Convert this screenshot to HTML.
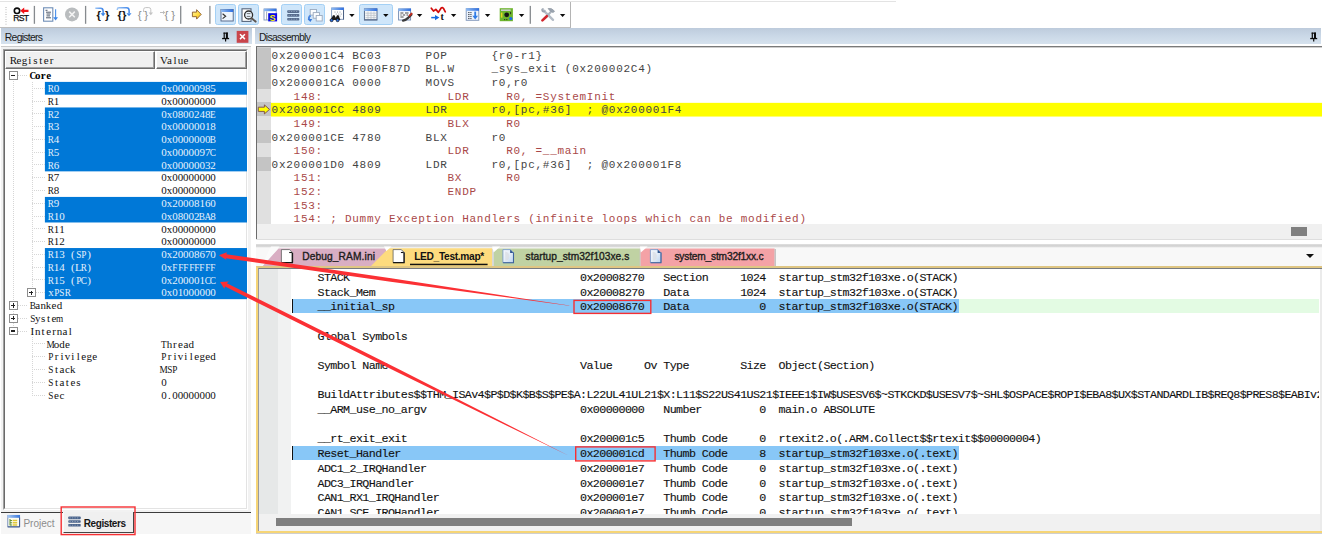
<!DOCTYPE html>
<html>
<head>
<meta charset="utf-8">
<title>uVision Debug</title>
<style>
html,body{margin:0;padding:0;}
body{width:1322px;height:538px;overflow:hidden;background:#fff;position:relative;font-family:"Liberation Sans",sans-serif;}
div,span,svg{position:absolute;box-sizing:border-box;}
i,s,u,b{font-style:normal;text-decoration:none;font-weight:normal;}

/* ---------- toolbar ---------- */
#topline{left:0;top:1px;width:896px;height:1.4px;background:#e3e3e3;}
#tb{left:0;top:2.4px;width:571px;height:25.2px;background:#fefefe;border-right:1.2px solid #b4b4b4;border-bottom:1px solid #bdbdbd;}
.grip{left:5px;top:5px;width:2px;height:19px;background-image:linear-gradient(#c8c8c8 50%,transparent 50%);background-size:2px 2.4px;opacity:.8}
.sep{top:6px;width:1.3px;height:18px;background:#8a8a8a;}
.tog{top:4px;height:20.6px;background:#cfe6fa;border:1px solid #a3d0f5;border-radius:2.5px;}
.dd{top:13.7px;width:0;height:0;border-left:2.7px solid transparent;border-right:2.7px solid transparent;border-top:3px solid #111;}

/* ---------- title bars ---------- */
.title{top:27.6px;height:16.3px;background:linear-gradient(#bdcbdc,#c9d7e6 45%,#d6e2ee);}
.title b{position:absolute;left:3.6px;top:4.2px;font-size:10.4px;letter-spacing:-0.7px;color:#1a1a1a;line-height:12px;}

/* ---------- left panel ---------- */
#lp{left:1.2px;top:46px;width:250.3px;height:466.4px;background:#f2f2f2;border-top:1px solid #cacaca;}
#lpf{left:3.4px;top:48.6px;width:244.4px;height:461.4px;background:#fff;border:1px solid #a0a0a0;border-right-color:#fff;border-bottom-color:#fff;}
#lpf2{left:4.3px;top:49.5px;width:242.6px;height:459.6px;border:1px solid #6a6a6a;border-right-color:#e3e3e3;border-bottom-color:#e3e3e3;}
.hd{top:50.5px;height:18px;background:#f0f0f0;border-top:1px solid #fff;border-left:1px solid #fff;border-right:1.2px solid #6d6d6d;border-bottom:1.2px solid #6d6d6d;}
.hd:after{content:"";position:absolute;right:0;bottom:0;left:0;top:0;border-right:1px solid #a0a0a0;border-bottom:1px solid #a0a0a0;}
.rt{height:12.8px;line-height:12.9px;font-family:"Liberation Serif",serif;font-size:11px;color:#111;white-space:nowrap;}
.rt i{display:inline-block;width:15.46px;margin:0 -5px;text-align:center;position:static;}
.rt i.n{transform:scaleX(.84);}
.rt.w{color:#e6f1fb;}
.rt.b{font-weight:bold;color:#000;}
.rt.b i{font-weight:bold;width:15.5px;}
.rsel{left:45px;width:202px;background:#0b78d7;}
.tl{height:1px;background-image:linear-gradient(90deg,#d6d6d6 50%,transparent 50%);background-size:2px 1px;}
.tv{width:1px;background-image:linear-gradient(#d6d6d6 50%,transparent 50%);background-size:1px 2px;}
.tb{width:8.6px;height:8.6px;border:1px solid #8e8e8e;background:#fff;}
.tb s{position:absolute;left:1.2px;right:1.2px;top:2.6px;height:1.3px;background:#222;}
.tb u{position:absolute;top:1.2px;bottom:1.2px;left:2.6px;width:1.3px;background:#222;}

/* bottom tabs of left panel */
#lbline{left:1.2px;top:511.7px;width:250px;height:1.2px;background:#3c3c3c;}
#lbtabs{left:1.2px;top:512.9px;width:250.3px;height:21px;background:#f6f6f6;}
#rtab{left:63px;top:512px;width:70.6px;height:20.6px;background:#f0f0f0;border-right:1.3px solid #444;border-bottom:1.3px solid #444;border-left:1px solid #fafafa;}
#redbox1{left:60.5px;top:506.4px;width:75.3px;height:28.8px;border:1.3px solid #f2353a;}
.btxt{font-size:10px;line-height:12px;letter-spacing:0;white-space:nowrap;}

/* ---------- disassembly ---------- */
#dis{left:255.6px;top:46px;width:1066.4px;height:178px;background:#fff;border-top:1px solid #7a7a7a;border-left:1.2px solid #6c6c6c;box-shadow:inset 0 1px 0 #cdcdcd;}
.dg{left:257px;width:14px;background:#c4c4c4;}
.dg.l{background:#e0e0e0;}
.dy{left:270.8px;width:1051.2px;background:#ffff00;}
.dt{left:271.6px;height:13.7px;line-height:14.2px;font-family:"Liberation Mono",monospace;font-size:11px;letter-spacing:0.73px;color:#444;white-space:pre;}
.dt.src{color:#a94848;}
#dsb{left:256.8px;top:224px;width:1065.2px;height:15.8px;background:#f0f0f0;}
#dsbl{left:255.6px;top:224px;width:1.2px;height:15.6px;background:#6c6c6c;}
#dsbb{left:256px;top:239.4px;width:1066px;height:1px;background:#dedede;}
#dthumb{left:1291.2px;top:227.2px;width:16px;height:8.8px;background:#808080;}

/* ---------- editor tabs ---------- */
#strip{left:256px;top:244px;width:1066px;height:22.2px;background:linear-gradient(#e6e6e6,#d2d2d2 1px,#d6d6d6 2.4px,#f1f1f1 3.6px,#f8f8f8 4.5px);}
#tabdd{left:1305.8px;top:254px;width:0;height:0;border-left:4.4px solid transparent;border-right:4.4px solid transparent;border-top:4.6px solid #111;}
.tabt{top:250.8px;font-size:10.2px;line-height:12px;color:#1c1c1c;white-space:nowrap;letter-spacing:-0.1px;-webkit-text-stroke:0.35px #1c1c1c;}

/* ---------- editor ---------- */
#edY{left:256px;top:265.8px;width:1070px;height:267px;border:2.2px solid #f6d576;border-top-color:#dfc683;background:#fff;}
#edG{left:258.2px;top:267.6px;width:1066px;height:263.4px;border-left:1.2px solid #9b9b9b;border-top:1.2px solid #787c82;}
#edshadow{left:256px;top:532.8px;width:1066px;height:1px;background:#cfcfcf;}
#mg1{left:259.4px;top:268.8px;width:18.8px;height:245.4px;background:#e6e8e8;}
#mg2{left:278.2px;top:268.8px;width:13px;height:245.4px;background:#f1f2f2;}
#edclip{left:259.4px;top:268.8px;width:1059.6px;height:245.2px;overflow:hidden;}
#edr{left:1320.4px;top:269px;width:1.6px;height:262px;background:#ebebeb;}
.mt{left:291.9px;height:14.7px;line-height:14.9px;font-family:"Liberation Mono",monospace;font-size:11.7px;letter-spacing:-0.61px;color:#121212;white-space:pre;-webkit-text-stroke:0.12px #121212;}
.mh{background:#88c7f7;}
.mg{right:0;background:#e3fbe3;}
.mc{left:292px;width:1.3px;background:#111;}
#esb{left:259.4px;top:514px;width:1062.6px;height:16.6px;background:#f1f1f1;}
#ethumb{left:276px;top:517.5px;width:576px;height:8.4px;background:#7f7f7f;}
.rbox{border:1.25px solid #f0343a;}
</style>
</head>
<body>

<!-- toolbar -->
<div id="topline"></div>
<div id="tb">
  <div class="grip"></div>
</div>

<div class="tog" style="left:214.9px;width:21.3px"></div>
<div class="tog" style="left:237.7px;width:20.9px"></div>
<div class="tog" style="left:281.3px;width:21.2px"></div>
<div class="tog" style="left:303.8px;width:21px"></div>
<div class="tog" style="left:359px;width:33.7px"></div>
<svg style="left:0;top:0" width="571" height="28" viewBox="0 0 571 28">
<defs>
<linearGradient id="wt" x1="0" x2="1"><stop offset="0" stop-color="#8fbaf0"/><stop offset="1" stop-color="#2f6fe0"/></linearGradient>
<linearGradient id="ya" x1="0" x2="1" y1="0" y2="1"><stop offset="0" stop-color="#fff6a8"/><stop offset="0.6" stop-color="#ffd83a"/><stop offset="1" stop-color="#e8a820"/></linearGradient>
<linearGradient id="ba" x1="0" x2="1"><stop offset="0" stop-color="#9cc4f4"/><stop offset="1" stop-color="#3f86ea"/></linearGradient>
</defs>
<rect x="33.75" y="5.9" width="1.3" height="17.9" fill="#868a8e"/><rect x="84.95" y="5.9" width="1.3" height="17.9" fill="#868a8e"/><rect x="180.05" y="5.9" width="1.3" height="17.9" fill="#868a8e"/><rect x="209.25" y="5.9" width="1.3" height="17.9" fill="#868a8e"/><rect x="529.65" y="5.9" width="1.3" height="17.9" fill="#868a8e"/>
<polygon points="349.2,13.9 354.6,13.9 351.9,16.9" fill="#0c0c0c"/><polygon points="383.1,13.9 388.5,13.9 385.8,16.9" fill="#0c0c0c"/><polygon points="416.9,13.9 422.3,13.9 419.6,16.9" fill="#0c0c0c"/><polygon points="450.9,13.9 456.3,13.9 453.6,16.9" fill="#0c0c0c"/><polygon points="484.9,13.9 490.3,13.9 487.6,16.9" fill="#0c0c0c"/><polygon points="518.9,13.9 524.3,13.9 521.6,16.9" fill="#0c0c0c"/><polygon points="559.9,13.9 565.3,13.9 562.6,16.9" fill="#0c0c0c"/>
<!-- RST -->
<circle cx="17" cy="10.8" r="2.7" fill="#fff" stroke="#0a0a0a" stroke-width="1.6"/>
<polygon points="20.3,10.8 24.2,7.6 24.2,9.7 28.5,9.7 28.5,11.9 24.2,11.9 24.2,14" fill="#f01218"/>
<text x="13.3" y="21" font-family="Liberation Sans" font-size="8.6" letter-spacing="-0.75" fill="#0c0c0c" stroke="#0c0c0c" stroke-width="0.25">RST</text>
<!-- doc + blue down arrow -->
<rect x="43.6" y="7.8" width="9.2" height="13.4" fill="#fff" stroke="#6e8db6" stroke-width="1.1"/>
<path d="M45.5 10.3h2M46 12.2h5M46.5 14h4M46.5 15.9h3.5M46 17.8h5" stroke="#3d4a5c" stroke-width="0.9" fill="none"/>
<path d="M55.6 9.3V18" stroke="#4a90ea" stroke-width="1.1"/>
<polygon points="53.2,17.2 58,17.2 55.6,20.4" fill="#3b86e8"/>
<!-- stop -->
<circle cx="72" cy="14.4" r="7" fill="#b9bcbe"/>
<path d="M69.2 11.6l5.6 5.6M74.8 11.6l-5.6 5.6" stroke="#f4f4f4" stroke-width="1.5"/>
<!-- step in -->
<g font-family="Liberation Sans" font-weight="bold" font-size="11.3" fill="#161616">
<text x="96.6" y="18.5">{</text><text x="104.9" y="18.5">}</text>
<text x="117.6" y="18.5">{</text><text x="122" y="18.5">}</text>
</g>
<path d="M95.3 8.3h5.2q2.6 0 2.6 2.6v3" fill="none" stroke="url(#ba)" stroke-width="1.5"/>
<polygon points="100.6,13.3 105.5,13.3 103.1,16.2" fill="#3b86e8"/>
<!-- step over -->
<path d="M117.3 10v-0.6q0-1.6 1.6-1.6h7.6q2.6 0 2.6 2.6v2.6" fill="none" stroke="url(#ba)" stroke-width="1.5"/>
<polygon points="126.5,13.2 131.5,13.2 129,16.2" fill="#3b86e8"/>
<!-- step out (gray) -->
<g font-family="Liberation Sans" font-size="11.5" fill="#8f8f8f">
<text x="137.8" y="19">{</text><text x="144.2" y="19">}</text>
<text x="164.6" y="19">{</text><text x="171.2" y="19">}</text>
</g>
<path d="M143.6 12v-2.4q0-2 2-2h3.2q2 0 2 2v3.4" fill="none" stroke="#c3c3c3" stroke-width="1"/>
<polygon points="148.6,12.6 153,12.6 150.8,15.2" fill="#c3c3c3"/>
<!-- run to cursor (gray) -->
<path d="M160 12.5h4.6M163 10.9l1.7 1.6l-1.7 1.6" stroke="#b5b5b5" stroke-width="0.9" fill="none"/>
<!-- yellow arrow -->
<polygon points="192.4,12.1 196.6,12.1 196.6,9.7 201.2,14.4 196.6,19.1 196.6,16.7 192.4,16.7" fill="url(#ya)" stroke="#8a5a2a" stroke-width="0.9" stroke-linejoin="round"/>
<!-- cmd window -->
<rect x="221" y="9.5" width="12.2" height="11.5" fill="#eef5fd" stroke="#4d6183" stroke-width="0.9"/>
<rect x="221" y="9.3" width="12.2" height="2.7" fill="url(#wt)"/>
<path d="M222.6 13.8l3 2.4l-3 2.4" stroke="#333" stroke-width="1.2" fill="none"/>
<!-- doc + magnifier -->
<rect x="242" y="8.8" width="9" height="12.6" fill="#fff" stroke="#56657c" stroke-width="1.1"/>
<circle cx="248.6" cy="15" r="4" fill="#e8f2fc" stroke="#2e2e2e" stroke-width="1.3"/>
<path d="M246.8 13.6h3.6M246.8 16.4h3.6" stroke="#555" stroke-width="0.8"/>
<path d="M251.6 18.2l4 3.4" stroke="#5d5650" stroke-width="2" stroke-linecap="round"/>
<!-- window with S -->
<rect x="264" y="9" width="12.2" height="11" fill="#fff" stroke="#7d94b8" stroke-width="0.9"/>
<rect x="264" y="8.7" width="12.4" height="2.5" fill="url(#wt)"/>
<path d="M266.6 11.5v8.5" stroke="#8a97ab" stroke-width="0.8"/>
<rect x="268.2" y="13.2" width="8.9" height="8.2" fill="#0a0ae6"/>
<text x="269.6" y="20.8" font-family="Liberation Sans" font-weight="bold" font-size="9.2" fill="#f2f200">S</text>
<!-- registers -->
<g fill="#566b8c"><rect x="287.2" y="10.2" width="12.1" height="2.7" rx="0.8"/><rect x="287.2" y="14" width="12.1" height="2.8" rx="0.8"/><rect x="287.2" y="17.9" width="12.1" height="2.7" rx="0.8"/></g>
<path d="M288.5 11.5h10M288.5 15.4h10M288.5 19.2h10" stroke="#9fb0c8" stroke-width="0.7" stroke-dasharray="1.2 1.3"/>
<!-- call stack windows -->
<g fill="#fbfdff" stroke="#9aa9be" stroke-width="0.9"><rect x="310.2" y="9.5" width="6.3" height="5.6"/><rect x="313.2" y="12.6" width="6.3" height="5.6"/><rect x="316.2" y="15.5" width="6" height="5.5"/></g>
<path d="M310.6 15.6q-2.6 1.6 -1.4 4.4" fill="none" stroke="#4a86e0" stroke-width="1.8"/>
<polygon points="307.6,19 312.2,19 310.4,22" fill="#3a78d8"/>
<!-- window with binoculars -->
<rect x="331.6" y="8" width="12" height="11.3" fill="#fff" stroke="#7d94b8" stroke-width="0.9"/>
<rect x="331.4" y="7.6" width="12.5" height="2.4" fill="url(#wt)"/>
<g fill="#7c8798"><circle cx="335" cy="12" r=".55"/><circle cx="337.5" cy="12" r=".55"/><circle cx="340" cy="12" r=".55"/><circle cx="336.2" cy="14" r=".55"/><circle cx="338.8" cy="14" r=".55"/><circle cx="341.2" cy="14" r=".55"/><circle cx="340" cy="16" r=".55"/></g>
<rect x="343" y="10" width="1" height="9.5" fill="#4d6183"/>
<path d="M330.6 20l2.4-4.8h1.6l1.2 2.6l1.2-2.6h1.6l1.8 4.8z" fill="#1a1a1a"/>
<circle cx="331.6" cy="20.2" r="1.5" fill="#2c6fe0" stroke="#111" stroke-width="0.7"/><circle cx="337.6" cy="20.2" r="1.5" fill="#2c6fe0" stroke="#111" stroke-width="0.7"/>
<!-- table window -->
<rect x="364.4" y="8.8" width="12.6" height="11.2" fill="#f4f6f8" stroke="#4d6183" stroke-width="0.9"/>
<rect x="364.2" y="8.4" width="13" height="2.6" fill="url(#wt)"/>
<path d="M365.5 13.2h10.5M365.5 15.4h10.5M365.5 17.6h10.5M368 11.5v8M371 11.5v8M374 11.5v8" stroke="#b9bec6" stroke-width="0.7"/>
<rect x="364.2" y="19.2" width="13" height="1.1" fill="#5e7190"/>
<!-- window + pen -->
<rect x="398.6" y="9" width="12" height="11" fill="#fafcff" stroke="#6f88b0" stroke-width="0.9"/>
<rect x="398.3" y="8.5" width="12.7" height="2.6" fill="url(#wt)"/>
<path d="M400.4 13h3M405 13h3.5M400.4 15h1.2M402.8 15h2.4M406.5 15h1.6M400.4 17h3.2" stroke="#333" stroke-width="0.9"/>
<path d="M403 20.6q3-0.6 5.4-3l3-3" stroke="#3c3c3c" stroke-width="2.2" fill="none" stroke-linecap="round"/>
<path d="M409.6 15.6l2-2" stroke="#c02a1c" stroke-width="2" stroke-linecap="round"/>
<!-- wave / arrow / t -->
<path d="M431.3 8.2l2.2 2.9l2.3-1.7l2.6 3l2.6-4.2q1.4-1.2 2.6 0.4l1.7 3.2" fill="none" stroke="#d20a0a" stroke-width="1.7" stroke-linecap="round" stroke-linejoin="round"/>
<path d="M431.2 17.6h4.6" stroke="#1268e0" stroke-width="1.5"/>
<polygon points="435,15 439.4,17.6 435,20.2" fill="#1268e0"/>
<text x="440.6" y="19.6" font-family="Liberation Serif" font-weight="bold" font-size="10" fill="#111">t</text>
<!-- window with list + down arrow -->
<rect x="466.2" y="8.6" width="12.6" height="11.7" fill="#eef4fc" stroke="#7d94b8" stroke-width="0.9"/>
<rect x="466" y="8.2" width="13" height="2.6" fill="url(#wt)"/>
<path d="M468 12.6h3.6M468 14.6h3.6M468 16.6h3.6M468 18.6h3.6" stroke="#3b4350" stroke-width="0.9" stroke-dasharray="1.6 0.6"/>
<path d="M475.2 11.6v5" stroke="#2f7be6" stroke-width="1.8"/>
<polygon points="472.4,15.8 478,15.8 475.2,19.4" fill="#2f7be6"/>
<!-- green board -->
<rect x="499.7" y="8.2" width="13.2" height="13" fill="#6db52c"/>
<rect x="501" y="9.4" width="9.6" height="1.6" fill="#c9cdd0"/>
<rect x="500.9" y="12.6" width="1.5" height="5" fill="#e8d820"/>
<circle cx="506.7" cy="14.8" r="2.4" fill="#161616"/>
<path d="M504 19.6h1.2M506.2 19.6h1.2M510.6 12v2.2" stroke="#2a3a1a" stroke-width="1"/>
<circle cx="510.8" cy="18.6" r="1.6" fill="#1a6ae8"/>
<!-- tools -->
<path d="M543.2 10.2l9.8 9.6" stroke="#b4bcc6" stroke-width="2.4" stroke-linecap="round"/>
<path d="M541.2 9.6q0.6 -2 2.8 -1.6l-1.4 1.6l1.4 1.4l1.6-1.2q0.2 2.4-2 2.8q-2.2 0-2.4-3z" fill="#9aa4b0"/>
<path d="M552.2 10.6l-5 5.2" stroke="#aab2bc" stroke-width="2.2"/>
<path d="M546.8 16.2l-4.4 4.2" stroke="#d0242c" stroke-width="2.6" stroke-linecap="round"/>
<path d="M548 8.6q3.4-1.4 6.6 2.6l-1.6 1.6q-1.2-1.6-2.8-1.8z" fill="#9aa4b0" stroke="#8a929c" stroke-width="0.6"/>
</svg>


<!-- title bars -->
<div class="title" style="left:1.2px;width:250.6px"><b>Registers</b></div>
<div class="title" style="left:255.4px;width:1065.6px"><b>Disassembly</b></div>


<!-- pin / close icons -->
<svg style="left:0;top:27px" width="1322" height="18" viewBox="0 27 1322 18">
  <g fill="#0a0a0a">
    <rect x="223.5" y="32.6" width="4.4" height="1.1"/>
    <rect x="223.6" y="32.6" width="1.2" height="5.8"/>
    <rect x="225.9" y="32.6" width="2" height="5.8"/>
    <rect x="222.1" y="37.9" width="7" height="1.3"/>
    <rect x="225" y="39" width="1.2" height="2.5"/>
  </g>
  <g fill="#0a0a0a" transform="translate(1088.1,0)">
    <rect x="223.5" y="32.6" width="4.4" height="1.1"/>
    <rect x="223.6" y="32.6" width="1.2" height="5.8"/>
    <rect x="225.9" y="32.6" width="2" height="5.8"/>
    <rect x="222.1" y="37.9" width="7" height="1.3"/>
    <rect x="225" y="39" width="1.2" height="2.5"/>
  </g>
  <rect x="236.7" y="30.9" width="11.7" height="11.9" fill="#c9454b"/>
  <path d="M240 34.2l4.9 4.9M244.9 34.2l-4.9 4.9" stroke="#fff" stroke-width="1.5"/>
</svg>

<!-- left panel -->
<div id="lp"></div>
<div id="lpf"></div>
<div id="lpf2"></div>
<div class="hd" style="left:5.3px;width:150.2px"></div>
<div class="hd" style="left:155.5px;width:91.4px"></div>
<div class="rt" style="left:10.8px;top:53.8px"><i>R</i><i>e</i><i>g</i><i>i</i><i>s</i><i>t</i><i>e</i><i>r</i></div>
<div class="rt" style="left:161.3px;top:53.8px"><i>V</i><i>a</i><i>l</i><i>u</i><i>e</i></div>
<svg style="left:0;top:0" width="252" height="538" viewBox="0 0 252 538"><g fill="#0078d7"><rect x="44.9" y="81.90" width="202.1" height="12.78"/><rect x="44.9" y="107.46" width="202.1" height="63.90"/><rect x="44.9" y="196.92" width="202.1" height="25.56"/><rect x="44.9" y="248.04" width="202.1" height="51.12"/></g></svg>
<div class="tv" style="left:13px;top:80.51px;height:246.60px"></div>
<div class="tv" style="left:31.5px;top:81.51px;height:207.26px"></div>
<div class="tv" style="left:31.5px;top:337.11px;height:57.90px"></div>
<div class="rt b" style="left:29.5px;top:69.17px"><i class="n">C</i><i>o</i><i>r</i><i>e</i></div>
<div class="tl" style="left:18.0px;top:75.01px;width:10.0px"></div>
<div class="tb" style="left:9.0px;top:71.11px"><s></s></div>
<div class="rt w" style="left:48.3px;top:81.95px"><i class="n">R</i><i>0</i></div>
<div class="rt w" style="left:161.3px;top:81.95px"><i>0</i><i>x</i><i>0</i><i>0</i><i>0</i><i>0</i><i>0</i><i>9</i><i>8</i><i>5</i></div>
<div class="tl" style="left:32px;top:87.79px;width:13px"></div>
<div class="rt" style="left:48.3px;top:94.73px"><i class="n">R</i><i>1</i></div>
<div class="rt" style="left:161.3px;top:94.73px"><i>0</i><i>x</i><i>0</i><i>0</i><i>0</i><i>0</i><i>0</i><i>0</i><i>0</i><i>0</i></div>
<div class="tl" style="left:32px;top:100.57px;width:13px"></div>
<div class="rt w" style="left:48.3px;top:107.51px"><i class="n">R</i><i>2</i></div>
<div class="rt w" style="left:161.3px;top:107.51px"><i>0</i><i>x</i><i>0</i><i>8</i><i>0</i><i>0</i><i>2</i><i>4</i><i>8</i><i class="n">E</i></div>
<div class="tl" style="left:32px;top:113.35px;width:13px"></div>
<div class="rt w" style="left:48.3px;top:120.29px"><i class="n">R</i><i>3</i></div>
<div class="rt w" style="left:161.3px;top:120.29px"><i>0</i><i>x</i><i>0</i><i>0</i><i>0</i><i>0</i><i>0</i><i>0</i><i>1</i><i>8</i></div>
<div class="tl" style="left:32px;top:126.13px;width:13px"></div>
<div class="rt w" style="left:48.3px;top:133.07px"><i class="n">R</i><i>4</i></div>
<div class="rt w" style="left:161.3px;top:133.07px"><i>0</i><i>x</i><i>0</i><i>0</i><i>0</i><i>0</i><i>0</i><i>0</i><i>0</i><i class="n">B</i></div>
<div class="tl" style="left:32px;top:138.91px;width:13px"></div>
<div class="rt w" style="left:48.3px;top:145.85px"><i class="n">R</i><i>5</i></div>
<div class="rt w" style="left:161.3px;top:145.85px"><i>0</i><i>x</i><i>0</i><i>0</i><i>0</i><i>0</i><i>0</i><i>9</i><i>7</i><i class="n">C</i></div>
<div class="tl" style="left:32px;top:151.69px;width:13px"></div>
<div class="rt w" style="left:48.3px;top:158.63px"><i class="n">R</i><i>6</i></div>
<div class="rt w" style="left:161.3px;top:158.63px"><i>0</i><i>x</i><i>0</i><i>0</i><i>0</i><i>0</i><i>0</i><i>0</i><i>3</i><i>2</i></div>
<div class="tl" style="left:32px;top:164.47px;width:13px"></div>
<div class="rt" style="left:48.3px;top:171.41px"><i class="n">R</i><i>7</i></div>
<div class="rt" style="left:161.3px;top:171.41px"><i>0</i><i>x</i><i>0</i><i>0</i><i>0</i><i>0</i><i>0</i><i>0</i><i>0</i><i>0</i></div>
<div class="tl" style="left:32px;top:177.25px;width:13px"></div>
<div class="rt" style="left:48.3px;top:184.19px"><i class="n">R</i><i>8</i></div>
<div class="rt" style="left:161.3px;top:184.19px"><i>0</i><i>x</i><i>0</i><i>0</i><i>0</i><i>0</i><i>0</i><i>0</i><i>0</i><i>0</i></div>
<div class="tl" style="left:32px;top:190.03px;width:13px"></div>
<div class="rt w" style="left:48.3px;top:196.97px"><i class="n">R</i><i>9</i></div>
<div class="rt w" style="left:161.3px;top:196.97px"><i>0</i><i>x</i><i>2</i><i>0</i><i>0</i><i>0</i><i>8</i><i>1</i><i>6</i><i>0</i></div>
<div class="tl" style="left:32px;top:202.81px;width:13px"></div>
<div class="rt w" style="left:48.3px;top:209.75px"><i class="n">R</i><i>1</i><i>0</i></div>
<div class="rt w" style="left:161.3px;top:209.75px"><i>0</i><i>x</i><i>0</i><i>8</i><i>0</i><i>0</i><i>2</i><i class="n">B</i><i class="n">A</i><i>8</i></div>
<div class="tl" style="left:32px;top:215.59px;width:13px"></div>
<div class="rt" style="left:48.3px;top:222.53px"><i class="n">R</i><i>1</i><i>1</i></div>
<div class="rt" style="left:161.3px;top:222.53px"><i>0</i><i>x</i><i>0</i><i>0</i><i>0</i><i>0</i><i>0</i><i>0</i><i>0</i><i>0</i></div>
<div class="tl" style="left:32px;top:228.37px;width:13px"></div>
<div class="rt" style="left:48.3px;top:235.31px"><i class="n">R</i><i>1</i><i>2</i></div>
<div class="rt" style="left:161.3px;top:235.31px"><i>0</i><i>x</i><i>0</i><i>0</i><i>0</i><i>0</i><i>0</i><i>0</i><i>0</i><i>0</i></div>
<div class="tl" style="left:32px;top:241.15px;width:13px"></div>
<div class="rt w" style="left:48.3px;top:248.09px"><i class="n">R</i><i>1</i><i>3</i><i>&nbsp;</i><i>(</i><i class="n">S</i><i class="n">P</i><i>)</i></div>
<div class="rt w" style="left:161.3px;top:248.09px"><i>0</i><i>x</i><i>2</i><i>0</i><i>0</i><i>0</i><i>8</i><i>6</i><i>7</i><i>0</i></div>
<div class="tl" style="left:32px;top:253.93px;width:13px"></div>
<div class="rt w" style="left:48.3px;top:260.87px"><i class="n">R</i><i>1</i><i>4</i><i>&nbsp;</i><i>(</i><i>L</i><i class="n">R</i><i>)</i></div>
<div class="rt w" style="left:161.3px;top:260.87px"><i>0</i><i>x</i><i class="n">F</i><i class="n">F</i><i class="n">F</i><i class="n">F</i><i class="n">F</i><i class="n">F</i><i class="n">F</i><i class="n">F</i></div>
<div class="tl" style="left:32px;top:266.71px;width:13px"></div>
<div class="rt w" style="left:48.3px;top:273.65px"><i class="n">R</i><i>1</i><i>5</i><i>&nbsp;</i><i>(</i><i class="n">P</i><i class="n">C</i><i>)</i></div>
<div class="rt w" style="left:161.3px;top:273.65px"><i>0</i><i>x</i><i>2</i><i>0</i><i>0</i><i>0</i><i>0</i><i>1</i><i class="n">C</i><i class="n">C</i></div>
<div class="tl" style="left:32px;top:279.49px;width:13px"></div>
<div class="rt w" style="left:48.3px;top:286.43px"><i>x</i><i class="n">P</i><i class="n">S</i><i class="n">R</i></div>
<div class="rt w" style="left:161.3px;top:286.43px"><i>0</i><i>x</i><i>0</i><i>1</i><i>0</i><i>0</i><i>0</i><i>0</i><i>0</i><i>0</i></div>
<div class="tl" style="left:36.0px;top:292.27px;width:9.0px"></div>
<div class="tb" style="left:27.0px;top:288.37px"><s></s><u></u></div>
<div class="rt" style="left:29.5px;top:299.21px"><i class="n">B</i><i>a</i><i>n</i><i>k</i><i>e</i><i>d</i></div>
<div class="tl" style="left:18.0px;top:305.05px;width:10.0px"></div>
<div class="tb" style="left:9.0px;top:301.15px"><s></s><u></u></div>
<div class="rt" style="left:29.5px;top:311.99px"><i class="n">S</i><i>y</i><i>s</i><i>t</i><i>e</i><i class="n">m</i></div>
<div class="tl" style="left:18.0px;top:317.83px;width:10.0px"></div>
<div class="tb" style="left:9.0px;top:313.93px"><s></s><u></u></div>
<div class="rt" style="left:29.5px;top:324.77px"><i>I</i><i>n</i><i>t</i><i>e</i><i>r</i><i>n</i><i>a</i><i>l</i></div>
<div class="tl" style="left:18.0px;top:330.61px;width:10.0px"></div>
<div class="tb" style="left:9.0px;top:326.71px"><s></s></div>
<div class="rt" style="left:48.3px;top:337.55px"><i class="n">M</i><i>o</i><i>d</i><i>e</i></div>
<div class="rt" style="left:161.3px;top:337.55px"><i class="n">T</i><i>h</i><i>r</i><i>e</i><i>a</i><i>d</i></div>
<div class="tl" style="left:32px;top:343.39px;width:13px"></div>
<div class="rt" style="left:48.3px;top:350.33px"><i class="n">P</i><i>r</i><i>i</i><i>v</i><i>i</i><i>l</i><i>e</i><i>g</i><i>e</i></div>
<div class="rt" style="left:161.3px;top:350.33px"><i class="n">P</i><i>r</i><i>i</i><i>v</i><i>i</i><i>l</i><i>e</i><i>g</i><i>e</i><i>d</i></div>
<div class="tl" style="left:32px;top:356.17px;width:13px"></div>
<div class="rt" style="left:48.3px;top:363.11px"><i class="n">S</i><i>t</i><i>a</i><i>c</i><i>k</i></div>
<div class="rt" style="left:161.3px;top:363.11px"><i class="n">M</i><i class="n">S</i><i class="n">P</i></div>
<div class="tl" style="left:32px;top:368.95px;width:13px"></div>
<div class="rt" style="left:48.3px;top:375.89px"><i class="n">S</i><i>t</i><i>a</i><i>t</i><i>e</i><i>s</i></div>
<div class="rt" style="left:161.3px;top:375.89px"><i>0</i></div>
<div class="tl" style="left:32px;top:381.73px;width:13px"></div>
<div class="rt" style="left:48.3px;top:388.67px"><i class="n">S</i><i>e</i><i>c</i></div>
<div class="rt" style="left:161.3px;top:388.67px"><i>0</i><i>.</i><i>0</i><i>0</i><i>0</i><i>0</i><i>0</i><i>0</i><i>0</i><i>0</i></div>
<div class="tl" style="left:32px;top:394.51px;width:13px"></div>

<div id="lbtabs"></div>
<div id="lbline"></div>
<div id="rtab"></div>
<div class="btxt" style="left:23.4px;top:517.8px;color:#8c8c8c">Project</div>
<div class="btxt" style="left:83.8px;top:517.8px;color:#161616;font-weight:bold;letter-spacing:-0.42px">Registers</div>
<svg style="left:0;top:512px" width="140" height="22" viewBox="0 512 140 22">
  <defs><linearGradient id="pwt" x1="0" x2="1"><stop offset="0" stop-color="#a8c8f2"/><stop offset="1" stop-color="#3a78dc"/></linearGradient></defs>
  <rect x="7.8" y="515.4" width="11.8" height="11.4" fill="#fdfdf2" stroke="#6c86b4" stroke-width="0.9"/>
  <rect x="7.4" y="515" width="12.6" height="2.8" fill="url(#pwt)"/>
  <path d="M19.6 517.5v9.4h-11.8" stroke="#40598a" stroke-width="1" fill="none"/>
  <path d="M10 519v6.4M10 520.6h2M10 522.8h2M10 525h2" stroke="#5a8a30" stroke-width="1"/>
  <path d="M12.6 520.6h4.6M12.6 522.8h4.6M12.6 525h4.6" stroke="#e0c838" stroke-width="1.5"/>
  <g fill="#4c658c"><rect x="68.3" y="516.6" width="12.4" height="2.6" rx="0.7"/><rect x="68.3" y="520.2" width="12.4" height="2.6" rx="0.7"/><rect x="68.3" y="523.9" width="12.4" height="2.7" rx="0.7"/></g>
  <path d="M69.5 517.9h10M69.5 521.5h10M69.5 525.2h10" stroke="#a6b6cc" stroke-width="0.7" stroke-dasharray="1.2 1.3"/>
</svg>


<!-- disassembly -->
<div id="dis"></div>
<div class="dg" style="top:47.80px;height:13.84px"></div>
<div class="dt" style="top:48.70px">0x200001C4 BC03      POP      {r0-r1}</div>
<div class="dg" style="top:61.44px;height:13.84px"></div>
<div class="dt" style="top:62.34px">0x200001C6 F000F87D  BL.W     _sys_exit (0x200002C4)</div>
<div class="dg" style="top:75.08px;height:13.84px"></div>
<div class="dt" style="top:75.98px">0x200001CA 0000      MOVS     r0,r0</div>
<div class="dg l" style="top:88.72px;height:13.84px"></div>
<div class="dt src" style="top:89.62px">   148:                 LDR     R0, =SystemInit</div>
<div class="dg" style="top:102.36px;height:13.84px"></div>
<div class="dy" style="top:103px;height:13px"></div><div class="dy" style="top:116px;height:1px;opacity:.55"></div><div class="dy" style="top:102px;height:1px;opacity:.15"></div>
<div class="dt" style="top:103.26px">0x200001CC 4809      LDR      r0,[pc,#36]  ; @0x200001F4</div>
<div class="dg l" style="top:116.00px;height:13.84px"></div>
<div class="dt src" style="top:116.90px">   149:                 BLX     R0</div>
<div class="dg" style="top:129.64px;height:13.84px"></div>
<div class="dt" style="top:130.54px">0x200001CE 4780      BLX      r0</div>
<div class="dg l" style="top:143.28px;height:13.84px"></div>
<div class="dt src" style="top:144.18px">   150:                 LDR     R0, =__main</div>
<div class="dg" style="top:156.92px;height:13.84px"></div>
<div class="dt" style="top:157.82px">0x200001D0 4809      LDR      r0,[pc,#36]  ; @0x200001F8</div>
<div class="dg l" style="top:170.56px;height:13.84px"></div>
<div class="dt src" style="top:171.46px">   151:                 BX      R0</div>
<div class="dg l" style="top:184.20px;height:13.84px"></div>
<div class="dt src" style="top:185.10px">   152:                 ENDP</div>
<div class="dg l" style="top:197.84px;height:13.84px"></div>
<div class="dt src" style="top:198.74px">   153:</div>
<div class="dg l" style="top:211.48px;height:13.84px"></div>
<div class="dt src" style="top:212.38px">   154: ; Dummy Exception Handlers (infinite loops which can be modified)</div>
<svg style="left:257px;top:102px" width="14" height="15" viewBox="257 102 14 15">
  <polygon points="258.3,107.2 264.4,107.2 264.4,104.9 269.5,109.4 264.4,113.9 264.4,111.4 258.3,111.4" fill="#ffff00" stroke="#7a4848" stroke-width="0.9" stroke-linejoin="round"/>
</svg>
<div id="dsb"></div><div id="dsbl"></div><div id="dsbb"></div><div id="dthumb"></div>

<!-- editor tab strip -->
<div id="strip"></div>
<svg id="tabs" style="left:256px;top:244px" width="1066" height="26" viewBox="256 244 1066 26">
  <defs>
    <linearGradient id="dg1" x1="0" x2="1" y1="0" y2="1"><stop offset="0" stop-color="#f6f9fd"/><stop offset="0.5" stop-color="#e4edf8"/><stop offset="1" stop-color="#bcd4f0"/></linearGradient>
  </defs>
  <!-- pink tab -->
  <polygon points="262.6,266 278.6,248.4 386,248.4 386,266" fill="#d9aec3"/>
  <!-- green tab -->
  <polygon points="493.6,248.5 640,248.5 640,266 493.6,266" fill="#c0d2a3"/>
  <!-- red tab -->
  <polygon points="640.3,248.5 774.6,248.5 774.6,266 640.3,266" fill="#f4a2a6"/>
  <rect x="774.6" y="249" width="1.2" height="17" fill="#b9b9b9"/>
  <rect x="639.6" y="249" width="1" height="17" fill="#c9c6c0"/>
  <!-- active yellow tab -->
  <polygon points="370.8,266.2 388.6,248.2 492.3,248.2 492.3,266.2" fill="#fddb7e"/>
  <rect x="492.3" y="249" width="1.4" height="17" fill="#cdd0d8"/>
  <!-- white notches -->
  <polygon points="384,246.4 391.5,246.4 386.4,251" fill="#fff"/>
  <polygon points="492.2,246.4 500.2,246.4 493.6,252.6" fill="#fff"/>
  <polygon points="640,246.4 647.6,246.4 640.8,252.6" fill="#fff"/>
  <polygon points="271,246.6 279.6,246.6 263,265.4 261.6,265.4" fill="#fbfbfb"/>
  <!-- underline for active -->
  <rect x="410" y="263.7" width="77.6" height="1.5" fill="#111"/>
  <!-- doc icons -->
  <g>
    <path d="M281.4 249.6h8.2l3.2 3.2v9.8h-11.4z" fill="#fff" stroke="#4a4a4a" stroke-width="0.7"/>
    <path d="M292.3 252.4v10.2h-10.9" fill="none" stroke="#151515" stroke-width="1.3"/>
    <path d="M289.2 252.5h3.6" stroke="#151515" stroke-width="1.1"/>
    <path d="M289.4 249.5l3.5 3.5" stroke="#9a9a9a" stroke-width="0.8"/>
  </g>
  <g transform="translate(111.7,0)">
    <path d="M281.4 249.6h8.2l3.2 3.2v9.8h-11.4z" fill="#fff" stroke="#4a4a4a" stroke-width="0.7"/>
    <path d="M292.3 252.4v10.2h-10.9" fill="none" stroke="#151515" stroke-width="1.3"/>
    <path d="M289.2 252.5h3.6" stroke="#151515" stroke-width="1.1"/>
    <path d="M289.4 249.5l3.5 3.5" stroke="#9a9a9a" stroke-width="0.8"/>
  </g>
  <g transform="translate(502.5,249.2)">
      <path d="M0.4 0.4h7.4l3.2 3.2v9.8h-10.6z" fill="url(#dg1)" stroke="#6d93c8" stroke-width="0.8"/>
      <path d="M11 3.4v10.1h-10.4" fill="none" stroke="#3e639c" stroke-width="1.1"/>
      <path d="M7.6 0.4l3.4 3.4h-3.4z" fill="#2f5690"/>
      <path d="M2.6 2.4q4.4 1 4.2 5t-4 4.2z" fill="#d9dde4" opacity="0.75"/>
    </g>
  <g transform="translate(650,249.2)">
      <path d="M0.4 0.4h7.4l3.2 3.2v9.8h-10.6z" fill="url(#dg1)" stroke="#6d93c8" stroke-width="0.8"/>
      <path d="M11 3.4v10.1h-10.4" fill="none" stroke="#3e639c" stroke-width="1.1"/>
      <path d="M7.6 0.4l3.4 3.4h-3.4z" fill="#2f5690"/>
      <path d="M2.6 2.4q4.4 1 4.2 5t-4 4.2z" fill="#d9dde4" opacity="0.75"/>
    </g>
</svg>
<div id="tabdd"></div>
<div class="tabt" style="left:302.2px;letter-spacing:0.12px">Debug_RAM.ini</div>
<div class="tabt" style="left:414.2px;font-weight:bold;-webkit-text-stroke:0;color:#111;letter-spacing:-0.32px">LED_Test.map*</div>
<div class="tabt" style="left:525.6px;letter-spacing:0.03px">startup_stm32f103xe.s</div>
<div class="tabt" style="left:674.4px;letter-spacing:-0.18px">system_stm32f1xx.c</div>

<!-- editor -->
<div id="edY"></div>
<div id="edG"></div>
<div id="edshadow"></div>
<div id="mg1"></div><div id="mg2"></div>
<div id="edclip"><div style="left:-259.4px;top:-268.8px;width:1322px;height:538px">
<div class="mt" style="top:270.90px">    STACK                                    0x20008270   Section     1024  startup_stm32f103xe.o(STACK)</div>
<div class="mt" style="top:285.59px">    Stack_Mem                                0x20008270   Data        1024  startup_stm32f103xe.o(STACK)</div>
<div class="mh" style="top:298.88px;height:14.29px;left:292px;width:667.0px"></div>
<div class="mg" style="top:298.88px;height:14.29px;left:959.0px"></div>
<div class="mc" style="top:299.08px;height:13.69px"></div>
<div class="mt" style="top:300.28px">    __initial_sp                             0x20008670   Data           0  startup_stm32f103xe.o(STACK)</div>
<div class="mt" style="top:329.66px">    Global Symbols</div>
<div class="mt" style="top:359.04px">    Symbol Name                              Value     Ov Type        Size  Object(Section)</div>
<div class="mt" style="top:388.42px">    BuildAttributes$$THM_ISAv4$P$D$K$B$S$PE$A:L22UL41UL21$X:L11$S22US41US21$IEEE1$IW$USESV6$~STKCKD$USESV7$~SHL$OSPACE$ROPI$EBA8$UX$STANDARDLIB$REQ8$PRES8$EABIv2</div>
<div class="mt" style="top:403.11px">    __ARM_use_no_argv                        0x00000000   Number         0  main.o ABSOLUTE</div>
<div class="mt" style="top:432.49px">    __rt_exit_exit                           0x200001c5   Thumb Code     0  rtexit2.o(.ARM.Collect$$rtexit$$00000004)</div>
<div class="mh" style="top:445.78px;height:14.29px;left:292px;width:667.0px"></div>
<div class="mc" style="top:445.98px;height:13.69px"></div>
<div class="mt" style="top:447.18px">    Reset_Handler                            0x200001cd   Thumb Code     8  startup_stm32f103xe.o(.text)</div>
<div class="mt" style="top:461.87px">    ADC1_2_IRQHandler                        0x200001e7   Thumb Code     0  startup_stm32f103xe.o(.text)</div>
<div class="mt" style="top:476.56px">    ADC3_IRQHandler                          0x200001e7   Thumb Code     0  startup_stm32f103xe.o(.text)</div>
<div class="mt" style="top:491.25px">    CAN1_RX1_IRQHandler                      0x200001e7   Thumb Code     0  startup_stm32f103xe.o(.text)</div>
<div class="mt" style="top:505.94px">    CAN1_SCE_IRQHandler                      0x200001e7   Thumb Code     0  startup_stm32f103xe.o(.text)</div>
</div></div>
<div id="esb"></div><div id="edr"></div><div id="ethumb"></div>


<!-- red arrows -->
<svg id="arrows" style="left:0;top:0" width="1322" height="538" viewBox="0 0 1322 538">
  <g fill="#fb3034"><polygon points="218.9,255.2 226.9,252.2 226.4,254.3 391.1,278.2 569.3,305.6 569.3,305.8 390.6,281.8 225.8,258.2 226.6,259.9"/><polygon points="220.1,282.0 228.9,281.4 226.8,283.2 398.4,369.0 569.3,455.9 569.3,456.1 396.9,371.9 225.1,286.6 224.3,288.7"/></g>
  <rect x="61.2" y="507" width="73.8" height="27.6" fill="none" stroke="#f62f33" stroke-width="1.4"/>
  <rect x="574" y="300.4" width="76.8" height="13" fill="none" stroke="#f62f33" stroke-width="1.4"/>
  <rect x="575.7" y="446.9" width="79.4" height="14" fill="none" stroke="#f62f33" stroke-width="1.4"/>
</svg>

</body>
</html>
